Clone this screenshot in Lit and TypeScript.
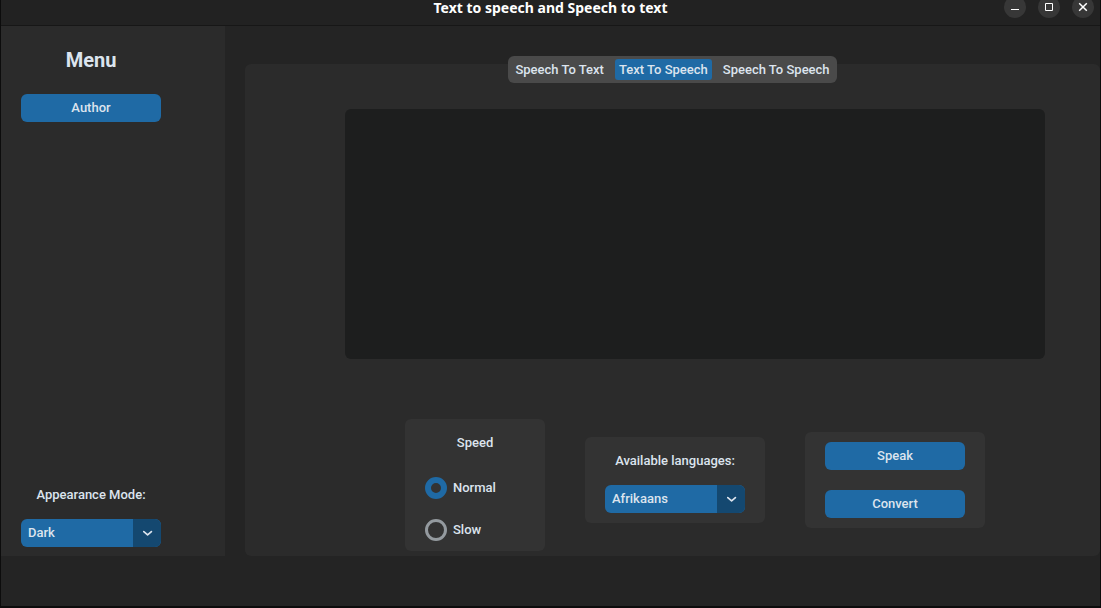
import { LitElement, html, css, svg } from "lit";
import { customElement, property, state } from "lit/decorators.js";

@customElement("option-menu")
class OptionMenu extends LitElement {
  static styles = css`
    :host {
      display: block;
      width: 140px;
    }
    .label {
      display: block;
      text-align: center;
      line-height: 28px;
      margin-bottom: 10px;
    }
    .field {
      display: grid;
      grid-template-columns: 1fr 28px;
      height: 28px;
      border-radius: 6px;
      overflow: hidden;
      background: #1f6aa5;
    }
    .select {
      grid-area: 1 / 1 / 2 / 3;
      appearance: none;
      border: 0;
      margin: 0;
      padding: 0 34px 0 7px;
      background: linear-gradient(#144870, #144870) right / 28px 100% no-repeat;
      color: #dce4ee;
      font: inherit;
    }
    .option {
      background: #2b2b2b;
    }
    .arrow {
      grid-area: 1 / 2;
      place-self: center;
      pointer-events: none;
    }
  `;

  @property() label = "";
  @property({ type: Array }) options: string[] = [];

  render() {
    return html`
      <label class="label" for="menu">${this.label}</label>
      <div class="field">
        <select class="select" id="menu">
          ${this.options.map((o) => html`<option class="option">${o}</option>`)}
        </select>
        <svg class="arrow" width="12" height="6" viewBox="0 0 12 6" fill="none" stroke="#dce4ee" stroke-width="1.7" stroke-linecap="round" stroke-linejoin="round">
          <path d="M2.8 1.6 6.6 4.8 10.4 1.6" />
        </svg>
      </div>
    `;
  }
}

const windowControls = [
  { name: "Minimize", icon: svg`<path d="M7 13.5h8" />` },
  { name: "Maximize", icon: svg`<path d="M7.5 7.5h7v7h-7z" />` },
  { name: "Close", icon: svg`<path d="M7.2 7.2l7.6 7.6M14.8 7.2l-7.6 7.6" stroke-width="1.5" />` },
];

const modes = ["Speech To Text", "Text To Speech", "Speech To Speech"];
const speeds = ["Normal", "Slow"];

@customElement("app-root")
class AppRoot extends LitElement {
  static styles = css`
    :host {
      display: flex;
      flex-direction: column;
      box-sizing: border-box;
      min-height: 100vh;
      border: solid #0c0c0c;
      border-width: 0 1px 2px;
      background: #242424;
      color: #dce4ee;
      font: 500 13px/16px Roboto, sans-serif;
    }
    .titlebar {
      display: grid;
      grid-template-columns: 1fr auto 1fr;
      align-items: start;
      height: 25px;
      border-bottom: 1px solid #171717;
      background: #222222;
    }
    .title {
      grid-column: 2;
      margin: 0;
      color: #ffffff;
      font: 700 14px/16px "Noto Sans", sans-serif;
    }
    .controls {
      display: flex;
      justify-content: flex-end;
      gap: 12px;
      margin-top: -4px;
      padding-right: 6px;
    }
    .control {
      width: 22px;
      height: 22px;
      padding: 0;
      border: 0;
      border-radius: 50%;
      background: #373737;
    }
    .glyph {
      display: block;
      fill: none;
      stroke: #ffffff;
    }
    .body {
      flex: 1;
      display: grid;
      grid-template-columns: 224px 1fr;
      column-gap: 20px;
      padding-bottom: 50px;
    }
    .sidebar {
      display: flex;
      flex-direction: column;
      align-items: flex-start;
      box-sizing: border-box;
      padding: 20px 20px 9px;
      background: #2b2b2b;
    }
    .heading {
      width: 140px;
      margin: 0 0 20px;
      text-align: center;
      font-size: 20px;
      line-height: 28px;
      font-weight: 700;
    }
    .appearance {
      margin-top: auto;
    }
    .button {
      display: block;
      width: 140px;
      height: 28px;
      padding: 0;
      border: 0;
      border-radius: 6px;
      background: #1f6aa5;
      color: inherit;
      font: inherit;
    }
    .panel {
      display: flex;
      flex-direction: column;
      margin-top: 38px;
      padding-bottom: 5px;
      border-radius: 6px;
      background: #2b2b2b;
    }
    .tabs {
      display: flex;
      align-self: center;
      gap: 7px;
      margin: -8px 0 26px;
      padding: 3px;
      border-radius: 6px;
      background: #4a4a4a;
    }
    .tab {
      height: 21px;
      padding: 0 4px;
      border: 0;
      border-radius: 3px;
      background: none;
      color: inherit;
      font: inherit;
    }
    .tab[aria-pressed="true"] {
      background: #1f6aa5;
    }
    .text {
      flex: 1;
      box-sizing: border-box;
      min-height: 250px;
      margin: 0 55px 50px 100px;
      padding: 8px;
      border: 0;
      border-radius: 6px;
      resize: none;
      background: #1d1e1e;
      color: inherit;
      font: inherit;
    }
    .options {
      display: flex;
      align-items: center;
      gap: 40px;
      padding-left: 160px;
    }
    .card {
      box-sizing: border-box;
      padding: 10px 20px;
      border-radius: 6px;
      background: #333333;
    }
    .speed {
      width: 140px;
      margin-top: 10px;
    }
    .caption {
      line-height: 28px;
      text-align: center;
    }
    .choices {
      display: flex;
      flex-direction: column;
      gap: 20px;
      margin-top: 20px;
    }
    .choice {
      display: flex;
      align-items: center;
      gap: 6px;
      line-height: 22px;
    }
    .radio {
      appearance: none;
      box-sizing: border-box;
      width: 22px;
      height: 22px;
      margin: 0;
      border: 3px solid #949a9f;
      border-radius: 50%;
    }
    .radio:checked {
      border: 6px solid #1f6aa5;
    }
    .actions {
      display: grid;
      gap: 20px;
    }
  `;

  @state() private mode = "Text To Speech";
  @state() private speed = "Normal";

  render() {
    return html`
      <header class="titlebar">
        <h1 class="title">Text to speech and Speech to text</h1>
        <div class="controls">
          ${windowControls.map(
            (c) => html`<button class="control" aria-label=${c.name}>
              <svg class="glyph" width="22" height="22" viewBox="0 0 22 22">${c.icon}</svg>
            </button>`
          )}
        </div>
      </header>
      <div class="body">
        <aside class="sidebar">
          <h2 class="heading">Menu</h2>
          <button class="button">Author</button>
          <option-menu class="appearance" label="Appearance Mode:" .options=${["Dark", "Light", "System"]}></option-menu>
        </aside>
        <main class="panel">
          <div class="tabs">
            ${modes.map(
              (m) => html`<button class="tab" aria-pressed=${m === this.mode} @click=${() => (this.mode = m)}>${m}</button>`
            )}
          </div>
          <textarea class="text" aria-label="Text"></textarea>
          <div class="options">
            <div class="card speed" role="radiogroup" aria-labelledby="speed">
              <div class="caption" id="speed">Speed</div>
              <div class="choices">
                ${speeds.map(
                  (s) => html`<label class="choice">
                    <input class="radio" type="radio" name="speed" .checked=${s === this.speed} @change=${() => (this.speed = s)} />
                    ${s}
                  </label>`
                )}
              </div>
            </div>
            <div class="card">
              <option-menu label="Available languages:" .options=${["Afrikaans", "English", "French"]}></option-menu>
            </div>
            <div class="card actions">
              <button class="button">Speak</button>
              <button class="button">Convert</button>
            </div>
          </div>
        </main>
      </div>
    `;
  }
}
